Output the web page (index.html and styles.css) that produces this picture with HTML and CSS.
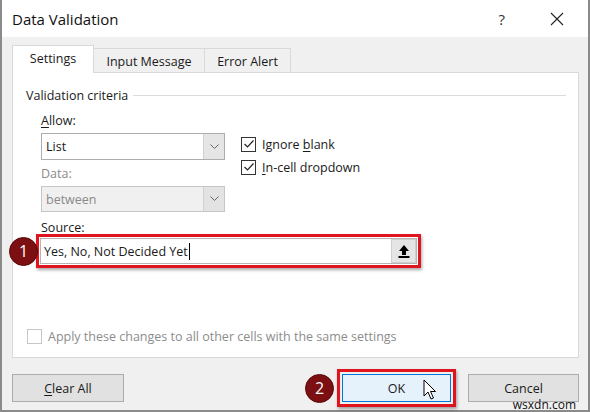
FILE: index.html
```html
<!DOCTYPE html>
<html>
<head>
<meta charset="utf-8">
<link rel="stylesheet" href="styles.css">
</head>
<body>
<div class="dialog">
  <div class="titlebar">
    <span class="title">Data Validation</span>
    <span class="help">?</span>
    <svg class="close" width="14" height="14" viewBox="0 0 14 14"><path d="M1 1 L13 13 M13 1 L1 13" stroke="#222" stroke-width="1.1"/></svg>
  </div>
  <div class="body">
    <div class="tabs">
      <div class="tab active">Settings</div>
      <div class="tab">Input Message</div>
      <div class="tab">Error Alert</div>
    </div>
    <div class="panel">
      <div class="group-title"><span>Validation criteria</span><div class="rule"></div></div>
      <div class="criteria">
        <div class="col">
          <div class="label"><u>A</u>llow:</div>
          <div class="combo">
            <span class="val">List</span>
            <span class="drop"><svg width="9" height="6" viewBox="0 0 9 6"><path d="M0.5 0.5 L4.5 4.5 L8.5 0.5" stroke="#666" fill="none"/></svg></span>
          </div>
          <div class="label disabled">Data:</div>
          <div class="combo dis">
            <span class="val">between</span>
            <span class="drop"><svg width="9" height="6" viewBox="0 0 9 6"><path d="M0.5 0.5 L4.5 4.5 L8.5 0.5" stroke="#666" fill="none"/></svg></span>
          </div>
        </div>
        <div class="checks">
          <div class="check"><span class="box"><svg width="12" height="10" viewBox="0 0 12 10"><path d="M1.5 5 L4.5 8 L10.5 1.5" stroke="#222" fill="none" stroke-width="1.2"/></svg></span><span>Ignore <u>b</u>lank</span></div>
          <div class="check"><span class="box"><svg width="12" height="10" viewBox="0 0 12 10"><path d="M1.5 5 L4.5 8 L10.5 1.5" stroke="#222" fill="none" stroke-width="1.2"/></svg></span><span><u>I</u>n-cell dropdown</span></div>
        </div>
      </div>
      <div class="label src"><u>S</u>ource:</div>
      <div class="source-row">
        <div class="badge b1">1</div>
        <div class="hl">
          <div class="input">
            <span class="val">Yes, No, Not Decided Yet<span class="caret"></span></span>
            <span class="upload"><svg width="12" height="14" viewBox="0 0 12 14"><path d="M6 1 L11 7 L8 7 L8 11 L4 11 L4 7 L1 7 Z" fill="#000"/><rect x="0.5" y="12" width="11" height="2" fill="#000"/></svg></span>
          </div>
        </div>
      </div>
      <div class="spacer"></div>
      <div class="apply"><span class="box dbox"></span><span>Apply these changes to all other cells with the same settings</span></div>
    </div>
    <div class="footer">
      <div class="btn"><span><u>C</u>lear All</span></div>
      <div class="right">
        <div class="badge b2">2</div>
        <div class="hl hl-ok">
          <div class="btn ok">OK
            <svg class="cursor" width="14" height="22" viewBox="0 0 14 22"><path d="M1 1 L1 17 L5 13 L8 20 L10.5 19 L7.5 12.5 L12.5 12.5 Z" fill="#fff" stroke="#000" stroke-width="1"/></svg>
          </div>
        </div>
        <div class="btn cancel">Cancel</div>
      </div>
    </div>
    <div class="watermark">wsxdn.com</div>
  </div>
</div>
</body>
</html>
```
FILE: styles.css
```css
* { box-sizing: border-box; }
html, body { margin: 0; padding: 0; background: #fff; }
body { width: 590px; height: 412px; overflow: hidden; font-family: "Open Sans", "Noto Sans", sans-serif; font-size: 12.5px; color: #1a1a1a; }
u { text-decoration: underline; text-underline-offset: 2px; }
.dialog { width: 590px; height: 412px; border-left: 2px solid #8a8a8a; border-right: 2px solid #8a8a8a; border-bottom: 2px solid #8a8a8a; display: flex; flex-direction: column; background: #f0f0f0; }
.titlebar { height: 37px; background: #fff; display: flex; align-items: center; padding-left: 10px; }
.title { font-size: 15px; color: #111; flex: 1; }
.help { font-size: 15px; color: #333; margin-right: 45px; }
.close { margin-right: 24px; }
.body { flex: 1; padding: 8px 9px 0 10px; display: flex; flex-direction: column; position: relative; }
.tabs { display: flex; align-items: flex-end; height: 28px; }
.tab { height: 25px; border: 1px solid #d9d9d9; border-bottom: none; background: #f0f0f0; display: flex; align-items: center; justify-content: center; margin-left: -1px; white-space: nowrap; }
.tab:nth-child(2) { width: 112px; }
.tab:nth-child(3) { width: 87px; }
.tab.active { height: 28px; background: #fff; width: 82px; margin-left: 0; padding-bottom: 3px; position: relative; z-index: 1; }
.panel { background: #fff; border: 1px solid #d9d9d9; height: 286px; margin-top: -1px; padding: 14px 12px 0 13px; display: flex; flex-direction: column; }
.group-title { display: flex; align-items: center; gap: 5px; }
.rule { flex: 1; height: 1px; background: #dcdcdc; }
.criteria { display: flex; padding-left: 15px; margin-top: 8px; }
.col { width: 184px; }
.label { height: 18px; line-height: 18px; }
.label.disabled { color: #8a8a8a; margin-top: 5px; }
.combo { height: 27px; border: 1px solid #adadad; display: flex; margin-top: 3px; background: #fff; }
.combo .val { flex: 1; padding-left: 4px; line-height: 25px; }
.combo .drop { width: 21px; background: #e5e5e5; border-left: 1px solid #d0d0d0; display: flex; align-items: center; justify-content: center; }
.combo.dis { background: #f0f0f0; border-color: #c6c6c6; height: 26px; margin-top: 3px; }
.combo.dis .val { color: #8a8a8a; }
.combo.dis .drop { background: #e3e3e3; }
.checks { margin-left: 16px; margin-top: 22px; }
.check { display: flex; align-items: center; height: 26px; margin-top: -3px; }
.box { width: 15px; height: 15px; border: 1px solid #333; margin-right: 6px; display: flex; align-items: center; justify-content: center; background: #fff; flex: none; }
.src { padding-left: 15px; margin-top: 7px; }
.source-row { display: flex; align-items: center; margin-left: -13px; margin-top: -3px; }
.badge { width: 29px; height: 29px; border-radius: 50%; background: #7b0f12; color: #fff; display: flex; align-items: center; justify-content: center; font-size: 16px; border: 1px solid #5a0a0a; flex: none; }
.b1 { margin-left: -4px; position: relative; z-index: 2; margin-right: -2px; }
.hl { border: 3px solid #e0141e; padding: 1px; box-shadow: 1px 2px 3px rgba(0,0,0,0.35); background: #fff; }
.source-row .hl { width: 385px; height: 34px; }
.input { height: 26px; border: 1px solid #b5b5b5; display: flex; }
.input .val { flex: 1; padding-left: 3px; display: flex; align-items: center; }
.caret { width: 1px; height: 17px; background: #000; margin-left: 1px; }
.upload { width: 25px; background: #e5e5e5; border: 1px solid #cfcfcf; display: flex; align-items: center; justify-content: center; }
.spacer { flex: 1; }
.apply { display: flex; align-items: center; color: #8c8c8c; margin-left: 1px; margin-bottom: 12px; }
.dbox { border-color: #c6c6c6; }
.footer { display: flex; justify-content: space-between; align-items: center; margin-top: 11px; }
.btn { width: 112px; height: 28px; border: 1px solid #adadad; background: #e1e1e1; display: flex; align-items: center; justify-content: center; }
.right { display: flex; align-items: center; }
.b2 { margin-right: 3px; }
.hl-ok { padding: 2px; background: #f0f0f0; margin-right: 12px; }
.btn.ok { width: 109px; height: 28px; border: 1px solid #0078d7; background: #e5f1fb; position: relative; }
.cursor { position: absolute; left: 80px; top: 4px; }
.cancel { width: 111px; }
.watermark { position: absolute; right: 12px; bottom: -3px; font-size: 12px; color: #111; }
```
